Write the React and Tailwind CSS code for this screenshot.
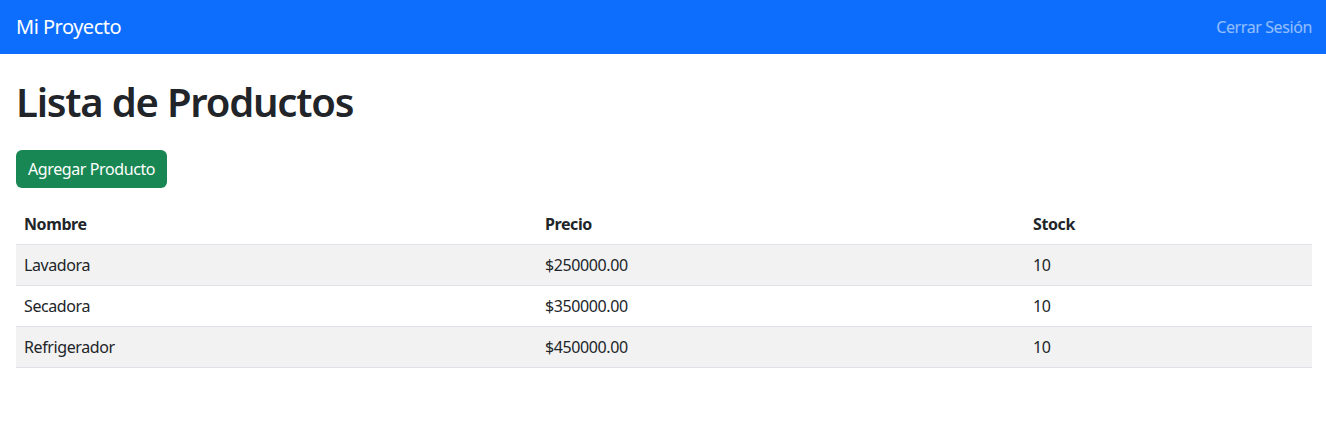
const products = [
  { id: 1, name: "Lavadora", price: 250000, stock: 10 },
  { id: 2, name: "Secadora", price: 350000, stock: 10 },
  { id: 3, name: "Refrigerador", price: 450000, stock: 10 },
]

const App = () => {
  return (
    <div className="min-h-[430px] bg-white text-[#212529] tracking-[-0.4px] font-['Segoe_UI','Noto_Sans',sans-serif]">
      {/* navbar */}
      <nav className="h-[54px] bg-[#0d6efd] flex items-center justify-between pl-4 pr-[14px]">
        <a href="#" className="text-white text-[20px] leading-[30px] tracking-[-0.5px]">Mi Proyecto</a>
        <a href="#" className="text-white/55 text-[16px] leading-6">Cerrar Sesión</a>
      </nav>

      <div className="pl-4 pr-[14px] pt-6">
        <h1 className="text-[40px] leading-[48px] font-semibold tracking-[-1.2px] mb-6">Lista de Productos</h1>

        <button className="bg-[#198754] text-white text-[16px] leading-6 px-3 py-[7px] rounded-md mb-4">
          Agregar Producto
        </button>

        {/* table */}
        <table className="w-full text-left text-[16px] leading-6 border-collapse">
          <thead>
            <tr className="border-b border-[#dee2e6]">
              <th className="px-2 py-2 w-[521px] font-bold">Nombre</th>
              <th className="px-2 py-2 w-[488px] font-bold">Precio</th>
              <th className="px-2 py-2 font-bold">Stock</th>
            </tr>
          </thead>
          <tbody>
            {products.map((p, i) => (
              <tr key={p.id} className={`border-b border-[#dee2e6] ${i % 2 === 0 ? "bg-[#f2f2f2]" : "bg-white"}`}>
                <td className="px-2 py-2">{p.name}</td>
                <td className="px-2 py-2">${p.price.toFixed(2)}</td>
                <td className="px-2 py-2">{p.stock}</td>
              </tr>
            ))}
          </tbody>
        </table>
      </div>
    </div>
  )
}

export default App
